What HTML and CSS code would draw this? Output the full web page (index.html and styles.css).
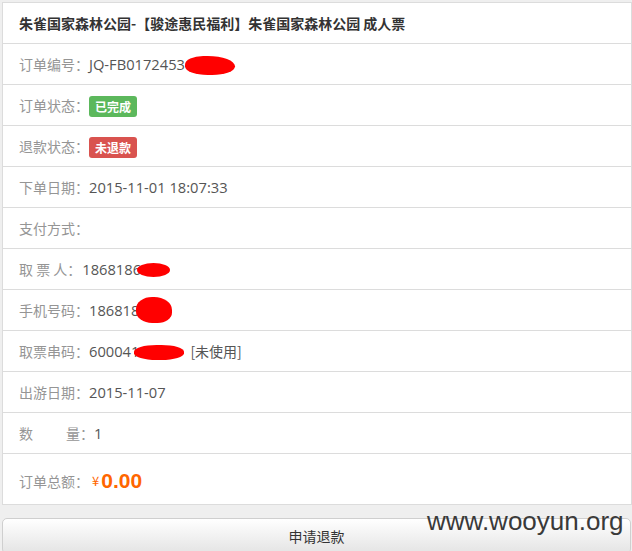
FILE: index.html
```html
<!DOCTYPE html>
<html lang="zh-CN">
<head>
<meta charset="utf-8">
<title>订单详情</title>
<link rel="stylesheet" href="styles.css">
</head>
<body>
<div class="card">
  <div class="row title">朱雀国家森林公园-【骏途惠民福利】朱雀国家森林公园 成人票</div>
  <div class="row"><span class="lbl">订单编号：</span><span class="val">JQ-FB0172453</span><span class="blob b1"></span></div>
  <div class="row"><span class="lbl">订单状态：</span><span class="badge green">已完成</span></div>
  <div class="row"><span class="lbl">退款状态：</span><span class="badge red">未退款</span></div>
  <div class="row"><span class="lbl">下单日期：</span><span class="val">2015-11-01 18:07:33</span></div>
  <div class="row"><span class="lbl">支付方式：</span></div>
  <div class="row"><span class="lbl">取 票 人：</span><span class="val v2">1868186</span><span class="blob b2"></span></div>
  <div class="row"><span class="lbl">手机号码：</span><span class="val">186818</span><span class="blob b3"></span></div>
  <div class="row"><span class="lbl">取票串码：</span><span class="val">600041</span><span class="blob b4"></span><span class="val use">[未使用]</span></div>
  <div class="row"><span class="lbl">出游日期：</span><span class="val">2015-11-07</span></div>
  <div class="row"><span class="lbl">数<span class="gap"></span>量：</span><span class="val">1</span></div>
  <div class="row total"><span class="lbl">订单总额：</span><span class="yen">¥</span><span class="price">0.00</span></div>
</div>
<div class="btnwrap">
  <button class="btn">申请退款</button>
  <span class="mark">www.wooyun.org</span>
</div>
</body>
</html>
```

FILE: styles.css
```css
html, body {
  margin: 0;
  padding: 0;
  background: #efefef;
}
body {
  padding: 2px 0 0 2px;
  font-family: "Noto Sans CJK SC", "Liberation Sans", sans-serif;
  font-size: 14px;
  overflow: hidden;
  height: 549px;
}
.card {
  background: #fff;
  border: 1px solid #dcdcdc;
  width: 628px;
}
.row {
  height: 40px;
  line-height: 40px;
  padding: 0 16px;
  border-top: 1px solid #dcdcdc;
  display: flex;
  align-items: center;
  white-space: nowrap;
}
.row.title {
  border-top: none;
  font-weight: bold;
  color: #333;
}
.row.total {
  height: 51px;
  line-height: 48px;
  padding-top: 3px;
  box-sizing: border-box;
}
.lbl {
  color: #959595;
}
.val {
  color: #555;
  font-family: "Open Sans", "Noto Sans CJK SC", sans-serif;
  font-size: 14.7px;
}
.v2 { margin-left: 1px; }
.use {
  margin-left: 6px;
  font-family: "Noto Sans CJK SC", sans-serif;
  font-size: 14px;
}
.gap {
  display: inline-block;
  width: 33px;
}
.badge {
  display: inline-block;
  color: #fff;
  font-size: 12px;
  font-weight: bold;
  line-height: 21px;
  height: 21px;
  padding: 0 6px;
  border-radius: 3px;
  position: relative;
  top: 1px;
}
.green { background: #5cb85c; }
.red { background: #d9534f; }
.blob {
  display: inline-block;
  background: #ff0000;
}
.b1 {
  width: 50px;
  height: 19px;
  border-radius: 40% 60% 50% 50% / 50% 60% 50% 50%;
  margin-left: 0;
  position: relative;
  top: 1px;
}
.b2 {
  width: 33px;
  height: 14px;
  border-radius: 50%;
  margin-left: -4px;
  position: relative;
  top: 1px;
}
.b3 {
  width: 36px;
  height: 26px;
  border-radius: 45% 50% 40% 45%;
  margin-left: -3px;
  position: relative;
  top: 0;
}
.b4 {
  width: 50px;
  height: 15px;
  border-radius: 45%;
  margin-left: -5px;
  position: relative;
  top: 1px;
}
.yen {
  color: #ff6600;
  font-size: 13px;
  margin-left: 3px;
  margin-right: 2px;
}
.price {
  color: #ff6600;
  font-size: 21px;
  font-weight: bold;
  font-family: "Liberation Sans", sans-serif;
}
.btnwrap {
  position: relative;
  margin-top: 13px;
}
.btn {
  display: block;
  width: 629px;
  height: 36px;
  border: 1px solid #cfcfcf;
  border-radius: 5px;
  background: linear-gradient(#ffffff, #e4e4e4);
  font-family: "Noto Sans CJK SC", sans-serif;
  font-size: 14px;
  color: #333;
  padding: 0;
  line-height: 32px;
}
.mark {
  position: absolute;
  left: 425px;
  top: -12px;
  font-family: "Liberation Sans", sans-serif;
  font-size: 26px;
  color: #3a3a3a;
  white-space: nowrap;
}
```
